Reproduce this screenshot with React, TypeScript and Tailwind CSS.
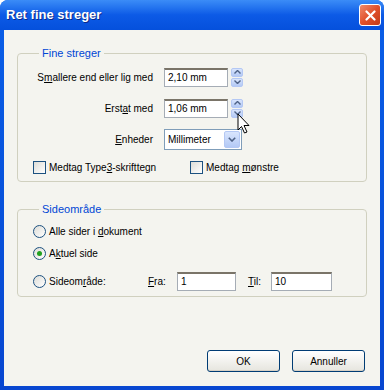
import React from "react";

const font = { fontFamily: '"Liberation Sans", Arial, sans-serif' };

function Spinner() {
  return (
    <div className="flex flex-col gap-[1px] w-[12px]">
      <div className="h-[9px] rounded-[2px] bg-gradient-to-b from-[#d9e5fd] to-[#b3c9f5] border border-[#b4c8f4] flex items-center justify-center">
        <svg width="7" height="4" viewBox="0 0 7 4">
          <path d="M0.5 3.5 L3.5 0.5 L6.5 3.5" fill="none" stroke="#4d6185" strokeWidth="1.4" />
        </svg>
      </div>
      <div className="h-[9px] rounded-[2px] bg-gradient-to-b from-[#d9e5fd] to-[#b3c9f5] border border-[#b4c8f4] flex items-center justify-center">
        <svg width="7" height="4" viewBox="0 0 7 4">
          <path d="M0.5 0.5 L3.5 3.5 L6.5 0.5" fill="none" stroke="#4d6185" strokeWidth="1.4" />
        </svg>
      </div>
    </div>
  );
}

function TextBox({ value, w }: { value: string; w: string }) {
  return (
    <div className={`${w} h-[19px] bg-white border border-[#a5acb5] border-t-[#7a7468] border-t-2 flex items-center px-[3px] text-[10px] text-black`}>
      {value}
    </div>
  );
}

function Checkbox({ children }: { children: React.ReactNode }) {
  return (
    <div className="flex items-center gap-[3px]">
      <div className="w-[13px] h-[13px] border border-[#1c5180] bg-gradient-to-br from-[#dcdcd7] to-white" />
      <span>{children}</span>
    </div>
  );
}

function Radio({ checked, children }: { checked?: boolean; children: React.ReactNode }) {
  return (
    <div className="flex items-center gap-[3px] h-[13px]">
      <div className="w-[13px] h-[13px] rounded-full border border-[#1c5180] bg-gradient-to-br from-[#dcdcd7] to-white flex items-center justify-center">
        {checked && <div className="w-[5px] h-[5px] rounded-full bg-[#21a121]" />}
      </div>
      <span>{children}</span>
    </div>
  );
}

function XpButton({ children }: { children: React.ReactNode }) {
  return (
    <div className="w-[73px] h-[22px] rounded-[3px] border border-[#003c74] bg-gradient-to-b from-white to-[#e6e5de] flex items-center justify-center text-[10px] text-black shadow-[inset_0_-1px_0_#d6d0c5]">
      {children}
    </div>
  );
}

export default function App() {
  return (
    <div className="w-[384px] h-[390px] bg-white" style={font}>
      <div className="w-full h-full flex flex-col bg-gradient-to-b from-[#0a5fe8] to-[#0846d0] rounded-t-[8px] overflow-hidden">
        {/* title bar */}
        <div className="h-[30px] flex items-center justify-between pl-[6px] pr-[3px] bg-gradient-to-b from-[#3b8cf7] via-[#0c5ae6] to-[#0550dc]">
          <span className="text-white font-bold text-[13px] [text-shadow:1px_1px_0_#0a2a8a]">Ret fine streger</span>
          <div className="w-[22px] h-[22px] rounded-[3px] border border-white bg-gradient-to-br from-[#f08a6a] via-[#e0502a] to-[#c23b17] flex items-center justify-center">
            <svg width="11" height="11" viewBox="0 0 11 11">
              <path d="M1.5 1.5 L9.5 9.5 M9.5 1.5 L1.5 9.5" stroke="white" strokeWidth="2.2" strokeLinecap="round" />
            </svg>
          </div>
        </div>

        {/* body */}
        <div className="relative flex-1 mx-[4px] mb-[4px] bg-[#f4f4ef] px-[13px] pt-[15px] text-[10px] text-black flex flex-col">
          <fieldset className="border border-[#d0d0bf] rounded-[4px] h-[137px] pl-[15px]">
            <legend className="ml-[6px] px-[3px] text-[11px] text-[#0046d5]">Fine streger</legend>
            <div className="flex flex-col pt-[6px]">
              <div className="flex items-center h-[19px]">
                <span className="w-[120px] text-right mr-[11px] whitespace-nowrap">
                  S<span className="underline">m</span>allere end eller lig med
                </span>
                <TextBox value="2,10 mm" w="w-[64px]" />
                <div className="ml-[3px]"><Spinner /></div>
              </div>
              <div className="flex items-center h-[19px] mt-[12px]">
                <span className="w-[120px] text-right mr-[11px]">
                  Erst<span className="underline">a</span>t med
                </span>
                <TextBox value="1,06 mm" w="w-[64px]" />
                <div className="ml-[3px]"><Spinner /></div>
              </div>
              <div className="flex items-center h-[21px] mt-[11px]">
                <span className="w-[120px] text-right mr-[11px]">
                  <span className="underline">E</span>nheder
                </span>
                <div className="w-[78px] h-[21px] bg-white border border-[#7f9db9] flex items-center justify-between pl-[3px] pr-[1px]">
                  <span>Millimeter</span>
                  <div className="w-[16px] h-[17px] rounded-[2px] bg-gradient-to-b from-[#d9e5fd] to-[#b3c9f5] border border-[#b4c8f4] flex items-center justify-center">
                    <svg width="8" height="5" viewBox="0 0 8 5">
                      <path d="M0.8 0.8 L4 4 L7.2 0.8" fill="none" stroke="#4d6185" strokeWidth="1.6" />
                    </svg>
                  </div>
                </div>
              </div>
              <div className="flex items-center mt-[10px]">
                <div className="w-[157px]">
                  <Checkbox>
                    Medtag Type<span className="underline">3</span>-skrifttegn
                  </Checkbox>
                </div>
                <Checkbox>
                  Medtag <span className="underline">m</span>ønstre
                </Checkbox>
              </div>
            </div>
          </fieldset>

          <fieldset className="border border-[#d0d0bf] rounded-[4px] h-[96px] mt-[19px] pl-[15px]">
            <legend className="ml-[6px] px-[3px] text-[11px] text-[#0046d5]">
              Sideområde
            </legend>
            <div className="flex flex-col pt-[7px]">
              <Radio>
                Alle sider i <span className="underline">d</span>okument
              </Radio>
              <div className="mt-[9px]">
                <Radio checked>
                  A<span className="underline">k</span>tuel side
                </Radio>
              </div>
              <div className="flex items-center mt-[12px]">
                <div className="w-[115px]">
                  <Radio>
                    Sideom<span className="underline">r</span>åde:
                  </Radio>
                </div>
                <span className="w-[29px]">
                  <span className="underline">F</span>ra:
                </span>
                <TextBox value="1" w="w-[59px]" />
                <span className="ml-[12px] w-[23px]">
                  <span className="underline">T</span>il:
                </span>
                <TextBox value="10" w="w-[61px]" />
              </div>
            </div>
          </fieldset>

          <div className="flex justify-end gap-[12px] mt-auto mb-[14px] mr-[2px]">
            <XpButton>OK</XpButton>
            <XpButton>Annuller</XpButton>
          </div>

          {/* mouse pointer */}
          <svg className="absolute left-[233px] top-[83px]" width="14" height="22" viewBox="0 0 14 22">
            <path d="M1 1 L1 17 L4.5 13.5 L7.5 20 L10 19 L7 12.5 L12 12.5 Z" fill="white" stroke="black" strokeWidth="1" strokeLinejoin="round" />
          </svg>
        </div>
      </div>
    </div>
  );
}
